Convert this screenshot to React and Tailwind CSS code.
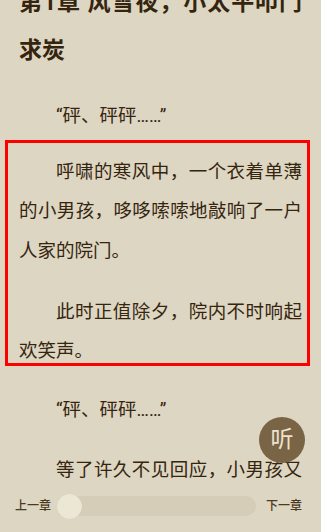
import React from 'react';

const body = "text-[18.5px] leading-[39.5px] text-justify indent-[2em]";

export default function App() {
  return (
    <div
      className="relative flex h-[532px] w-full flex-col overflow-hidden bg-[#ddd6c2] text-[#35250f]"
      style={{ fontFamily: 'Roboto, "Noto Sans CJK SC", sans-serif' }}
    >
      {/* Reading content */}
      <div className="h-[488px] shrink-0 overflow-hidden px-[19px]">
        <h1 className="mt-[-21px] text-justify text-[23px] font-bold leading-[48px]">
          第1章 风雪夜，小太平叩门求炭
        </h1>

        <p className={`${body} mt-[22px]`}>“砰、砰砰……”</p>

        {/* Highlighted passage */}
        <div className="mt-[3px] -ml-[14px] -mr-[8px] h-[226px] border-[3px] border-[#ff0000] pt-[10px] pl-[11px] pr-[5px]">
          <p className={body}>呼啸的寒风中，一个衣着单薄的小男孩，哆哆嗦嗦地敲响了一户人家的院门。</p>
          <p className={`${body} mt-[21.5px]`}>此时正值除夕，院内不时响起欢笑声。</p>
        </div>

        <p className={`${body} mt-[25px]`}>“砰、砰砰……”</p>
        <p className={`${body} mt-[20.5px]`}>等了许久不见回应，小男孩又敲了敲门。</p>
      </div>

      {/* Listen button */}
      <button className="absolute right-[16px] top-[417px] flex h-[46px] w-[46px] items-center justify-center rounded-full bg-[#7a6446] text-[23px] text-[#ebe3cf]">
        听
      </button>

      {/* Chapter slider */}
      <div className="flex h-[36px] shrink-0 items-center pl-[15px] pr-[19px] text-[12px] font-medium text-[#4a3a24]">
        <span>上一章</span>
        <div className="ml-[7px] mr-[10px] flex h-[20px] flex-1 items-center rounded-full bg-[#d5cdb7]">
          <div className="-ml-[1px] h-[25px] w-[25px] rounded-full bg-[#ece6d5] shadow-[0_0_1px_rgba(0,0,0,0.08)]" />
        </div>
        <span>下一章</span>
      </div>
    </div>
  );
}
